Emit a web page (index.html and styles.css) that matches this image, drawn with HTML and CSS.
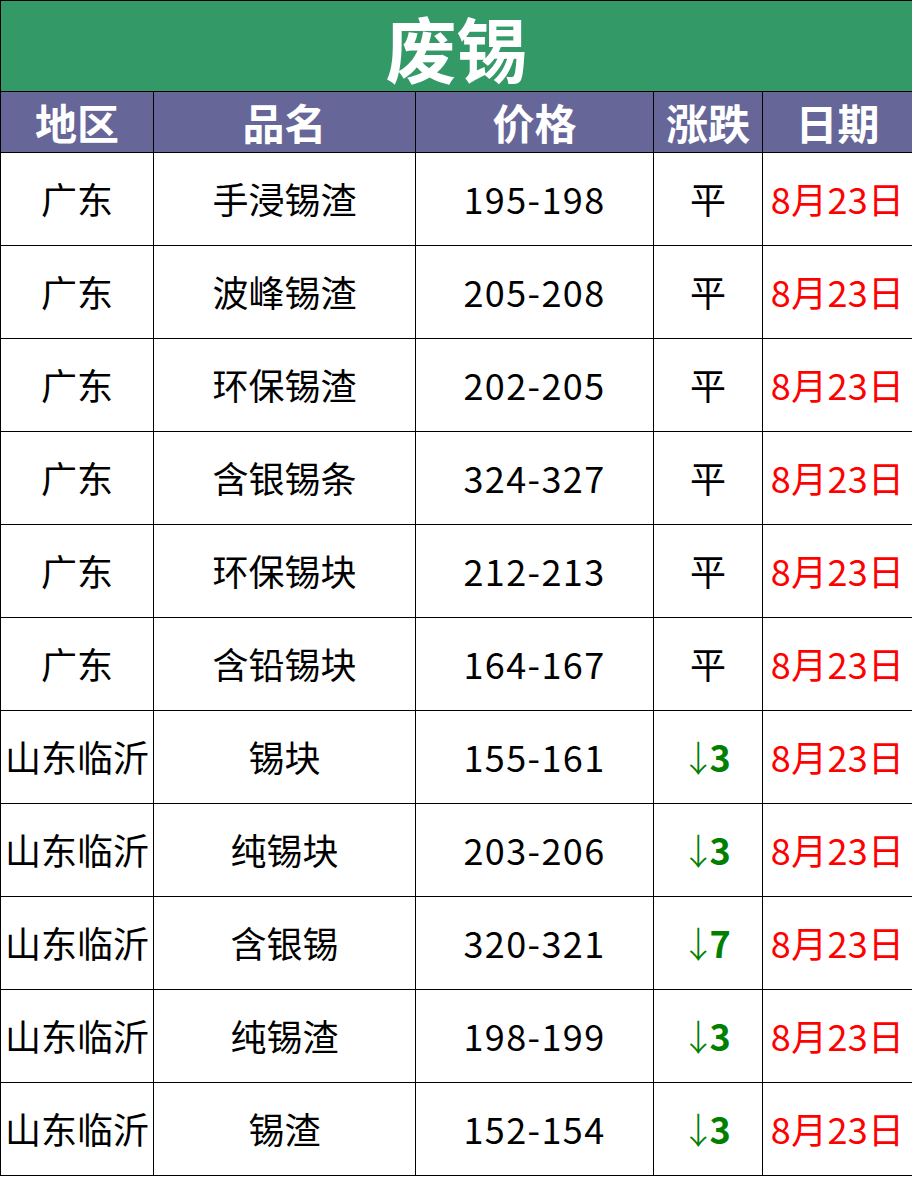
FILE: index.html
```html
<!DOCTYPE html>
<html lang="zh">
<head>
<meta charset="utf-8">
<title>废锡</title>
<link rel="stylesheet" href="styles.css">
</head>
<body>
<table class="sheet">
  <colgroup>
    <col class="c1"><col class="c2"><col class="c3"><col class="c4"><col class="c5">
  </colgroup>
  <tr class="title-row"><td colspan="5" class="title">废锡</td></tr>
  <tr class="head-row">
    <th>地区</th><th>品名</th><th>价格</th><th>涨跌</th><th>日期</th>
  </tr>
  <tr><td>广东</td><td>手浸锡渣</td><td class="num">195-198</td><td>平</td><td class="date">8月23日</td></tr>
  <tr><td>广东</td><td>波峰锡渣</td><td class="num">205-208</td><td>平</td><td class="date">8月23日</td></tr>
  <tr><td>广东</td><td>环保锡渣</td><td class="num">202-205</td><td>平</td><td class="date">8月23日</td></tr>
  <tr><td>广东</td><td>含银锡条</td><td class="num">324-327</td><td>平</td><td class="date">8月23日</td></tr>
  <tr><td>广东</td><td>环保锡块</td><td class="num">212-213</td><td>平</td><td class="date">8月23日</td></tr>
  <tr><td>广东</td><td>含铅锡块</td><td class="num">164-167</td><td>平</td><td class="date">8月23日</td></tr>
  <tr><td>山东临沂</td><td>锡块</td><td class="num">155-161</td><td class="down"><span class="arrow">↓</span>3</td><td class="date">8月23日</td></tr>
  <tr><td>山东临沂</td><td>纯锡块</td><td class="num">203-206</td><td class="down"><span class="arrow">↓</span>3</td><td class="date">8月23日</td></tr>
  <tr><td>山东临沂</td><td>含银锡</td><td class="num">320-321</td><td class="down"><span class="arrow">↓</span>7</td><td class="date">8月23日</td></tr>
  <tr><td>山东临沂</td><td>纯锡渣</td><td class="num">198-199</td><td class="down"><span class="arrow">↓</span>3</td><td class="date">8月23日</td></tr>
  <tr><td>山东临沂</td><td>锡渣</td><td class="num">152-154</td><td class="down"><span class="arrow">↓</span>3</td><td class="date">8月23日</td></tr>
</table>
</body>
</html>
```

FILE: styles.css
```css
html, body {
  margin: 0;
  padding: 0;
  background: #ffffff;
}
body {
  font-family: "Noto Sans CJK SC", "Noto Sans", sans-serif;
  color: #000000;
}
.sheet {
  border-collapse: collapse;
  table-layout: fixed;
  width: 912px;
}
.c1 { width: 153px; }
.c2 { width: 262px; }
.c3 { width: 238px; }
.c4 { width: 109px; }
.c5 { width: 150px; }
.sheet td, .sheet th {
  border: 1px solid #000000;
  padding: 0;
  text-align: center;
  vertical-align: middle;
  white-space: nowrap;
}
.sheet tr { height: 93px; }
.sheet td {
  font-size: 36px;
  font-weight: 400;
  line-height: 1.2;
}
.title-row { height: 91px !important; }
.sheet .title {
  background: #339966;
  color: #ffffff;
  font-size: 71px;
  font-weight: 700;
  line-height: 1.1;
  padding-top: 1px;
}
.head-row { height: 61px !important; }
.head-row th {
  background: #666699;
  color: #ffffff;
  font-size: 42px;
  font-weight: 700;
  line-height: 1.2;
}
.num {
  letter-spacing: 1.4px;
}
.sheet .down {
  color: #008000;
  font-weight: 700;
}
.arrow {
  font-weight: 300;
  display: inline-block;
  margin-left: -5px;
  margin-right: -5px;
  letter-spacing: -2px;
}
.date {
  color: #ff0000;
  letter-spacing: 0.3px;
}
```
